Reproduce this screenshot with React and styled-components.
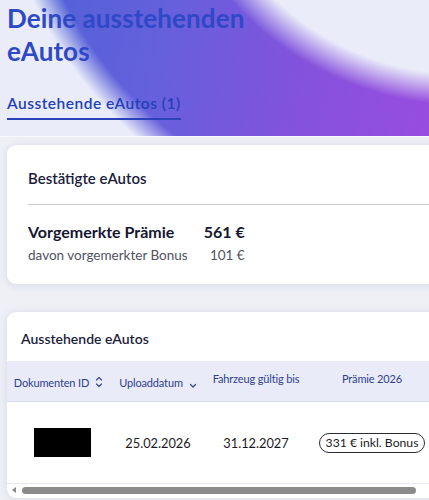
import React from "react";
import styled, { createGlobalStyle } from "styled-components";

const GlobalStyle = createGlobalStyle`
  html, body {
    margin: 0;
    padding: 0;
    background: #eef0f6;
    overflow: hidden;
  }
  body {
    font-family: Lato, "Noto Sans", sans-serif;
    -webkit-font-smoothing: antialiased;
  }
`;

const rows = [
  { uploaded: "25.02.2026", validUntil: "31.12.2027", premium: "331 € inkl. Bonus" },
];

const SortBoth = () => (
  <svg width="8" height="12" viewBox="0 0 8 12" fill="none" stroke="#3b4a93" strokeWidth="1.2" strokeLinecap="round" strokeLinejoin="round">
    <path d="M1.5 4 L4 1.5 L6.5 4" />
    <path d="M1.5 8 L4 10.5 L6.5 8" />
  </svg>
);

const SortDown = () => (
  <svg width="8" height="12" viewBox="0 0 8 12" fill="none" stroke="#3b4a93" strokeWidth="1.3" strokeLinecap="round" strokeLinejoin="round">
    <path d="M1.5 8.5 L4 11 L6.5 8.5" />
  </svg>
);

const App = () => {
  return (
    <>
      <GlobalStyle />
      <Page>
        <Hero>
          <Title>Deine ausstehenden eAutos</Title>
          <Tabs>
            <Tab $active>Ausstehende eAutos (1)</Tab>
          </Tabs>
        </Hero>

        <Content>
          <Card>
            <CardHead>Bestätigte eAutos</CardHead>
            <Summary>
              <SumLabel $strong>Vorgemerkte Prämie</SumLabel>
              <SumValue $strong>561 €</SumValue>
              <SumLabel>davon vorgemerkter Bonus</SumLabel>
              <SumValue>101 €</SumValue>
            </Summary>
          </Card>

          <Card $table>
            <TableTitle>Ausstehende eAutos</TableTitle>
            <Table>
              <colgroup>
                <col style={{ width: 103 }} />
                <col style={{ width: 96 }} />
                <col style={{ width: 100 }} />
                <col style={{ width: 132 }} />
                <col />
              </colgroup>
              <thead>
                <tr>
                  <Th>
                    <HeadInner>
                      Dokumenten ID <SortBoth />
                    </HeadInner>
                  </Th>
                  <Th>
                    <HeadInner>
                      Uploaddatum <SortDown />
                    </HeadInner>
                  </Th>
                  <Th $raised>Fahrzeug gültig bis</Th>
                  <Th $raised>Prämie 2026</Th>
                  <Th />
                </tr>
              </thead>
              <tbody>
                {rows.map((r) => (
                  <tr key={r.uploaded}>
                    <Td>
                      <Redacted />
                    </Td>
                    <Td>{r.uploaded}</Td>
                    <Td>{r.validUntil}</Td>
                    <Td>
                      <Badge>{r.premium}</Badge>
                    </Td>
                    <Td />
                  </tr>
                ))}
              </tbody>
            </Table>
            <ScrollBar>
              <ScrollArrow />
              <ScrollThumb />
            </ScrollBar>
          </Card>
        </Content>
      </Page>
    </>
  );
};

export default App;

const Page = styled.div`
  width: 429px;
  min-height: 500px;
  overflow: hidden;
`;

const Hero = styled.div`
  height: 137px;
  box-sizing: border-box;
  padding: 2px 0 0 7px;
  background:
    radial-gradient(
      ellipse 290px 258px at 470px -160px,
      #eaedf9 0%,
      #eaedf9 91%,
      rgba(234, 237, 249, 0) 103%,
      rgba(234, 237, 249, 0) 153%,
      #eaedf9 163%
    ),
    linear-gradient(100deg, #4a62d6 0%, #6660dc 38%, #8452dd 70%, #984ddf 100%);
  border-bottom: 1px solid #f6f7fc;
`;

const Title = styled.h1`
  margin: 0;
  width: 260px;
  font-size: 26px;
  line-height: 33px;
  font-weight: 700;
  color: #2e48c6;
  letter-spacing: 0.1px;
`;

const Tabs = styled.div`
  display: flex;
  margin-top: 26px;
`;

const Tab = styled.div`
  font-size: 15.5px;
  font-weight: 600;
  color: ${(p) => (p.$active ? "#2340b6" : "#555")};
  letter-spacing: 0.5px;
  padding-bottom: 6px;
  border-bottom: 2px solid ${(p) => (p.$active ? "#2a44b8" : "transparent")};
`;

const Content = styled.div`
  display: flex;
  flex-direction: column;
  gap: 28px;
  padding: 8px 0 0 7px;
`;

const Card = styled.div`
  width: 460px;
  background: #fff;
  border-radius: 9px;
  box-shadow: 0 1px 8px rgba(70, 80, 150, 0.14);
  padding: ${(p) => (p.$table ? "0" : "24px 0 21px 21px")};
  box-sizing: border-box;
`;

const CardHead = styled.div`
  font-size: 15px;
  font-weight: 600;
  color: #1c1d3a;
  padding-bottom: 17px;
  border-bottom: 1px solid #c9ccd8;
`;

const Summary = styled.div`
  display: grid;
  grid-template-columns: max-content max-content;
  column-gap: 16px;
  row-gap: 6px;
  padding-top: 17px;
  align-items: baseline;
`;

const SumLabel = styled.div`
  font-size: ${(p) => (p.$strong ? "16px" : "13.5px")};
  font-weight: ${(p) => (p.$strong ? 700 : 400)};
  color: ${(p) => (p.$strong ? "#151632" : "#505262")};
`;

const SumValue = styled(SumLabel)`
  text-align: right;
`;

const TableTitle = styled.div`
  font-size: 14px;
  font-weight: 600;
  color: #1c1d3a;
  padding: 18px 0 14px 14px;
`;

const Table = styled.table`
  width: 100%;
  border-collapse: collapse;
  table-layout: fixed;
`;

const Th = styled.th`
  height: 35px;
  background: #e9ecf8;
  border-bottom: 1px solid #d9dcea;
  font-size: 11px;
  font-weight: 400;
  letter-spacing: -0.15px;
  color: #2f3e8e;
  text-align: center;
  vertical-align: middle;
  white-space: nowrap;
  padding: 0 0 ${(p) => (p.$raised ? "5px" : "0")};
`;

const HeadInner = styled.span`
  display: inline-flex;
  align-items: center;
  gap: 6px;
  padding-top: 2px;
`;

const Td = styled.td`
  height: 81px;
  text-align: center;
  vertical-align: middle;
  font-size: 12.8px;
  color: #1b1b1f;
  border-bottom: 1px solid #e6e7ee;
  padding: 0;
`;

const Redacted = styled.div`
  width: 57px;
  height: 29px;
  background: #000;
  margin: 0 0 0 27px;
`;

const Badge = styled.span`
  display: inline-block;
  border: 1px solid #2a2b3a;
  border-radius: 10px;
  padding: 1px 6px 2px;
  font-size: 12.2px;
  color: #1b1b1f;
  white-space: nowrap;
`;

const ScrollBar = styled.div`
  display: flex;
  align-items: center;
  gap: 6px;
  height: 12px;
  padding-left: 5px;
  margin-bottom: 2px;
`;

const ScrollArrow = styled.div`
  width: 0;
  height: 0;
  border-top: 3.5px solid transparent;
  border-bottom: 3.5px solid transparent;
  border-right: 4px solid #8a8a8a;
`;

const ScrollThumb = styled.div`
  width: 394px;
  height: 7px;
  border-radius: 4px;
  background: #8b8b8b;
`;
